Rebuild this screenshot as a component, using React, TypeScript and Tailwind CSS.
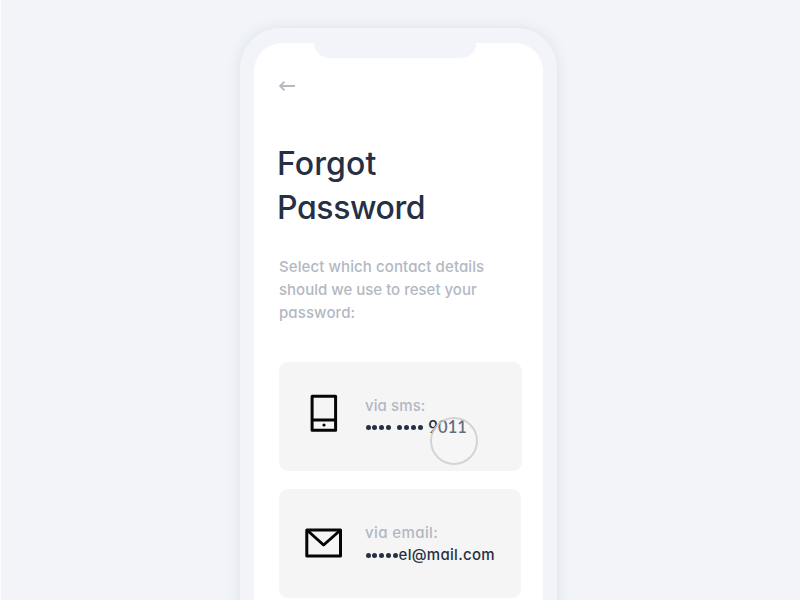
import React from 'react';

const dots = (count: number) => (
  <span className="flex gap-[1.9px]">
    {Array.from({ length: count }, (_, i) => (
      <span key={i} className="size-[5px] rounded-full bg-[#253044]" />
    ))}
  </span>
);

function PhoneIcon() {
  return (
    <svg className="h-[38px] w-[28px]" viewBox="0 0 28 38" fill="none" stroke="#050505" strokeWidth="3" strokeLinejoin="round">
      <rect x="2.1" y="2.3" width="23.5" height="34" />
      <path d="M2 26h24" />
      <circle cx="14" cy="31" r="1.6" fill="#050505" stroke="none" />
    </svg>
  );
}

function MailIcon() {
  return (
    <svg className="h-[30px] w-[38px]" viewBox="0 0 38 30" fill="none" stroke="#050505" strokeWidth="3" strokeLinejoin="round">
      <rect x="1.8" y="2" width="33.7" height="26" />
      <path d="M2.5 2.5L18.6 17L35 2.5" />
    </svg>
  );
}

export default function App() {
  return (
    <div className="flex h-[600px] w-[800px] justify-center overflow-hidden border-l border-[#fbfcfd] bg-[#f2f4f9] pr-[4px] pt-[28px] font-['Inter',sans-serif] font-medium text-[#253044] [font-feature-settings:'cv11','ss03']">
      <div className="h-[700px] w-[317px] shrink-0 rounded-[40px] bg-[#f2f4f9] px-[14px] pt-[15px] shadow-[0_0_14px_rgba(205,214,224,0.6)]">
        <main className="h-full rounded-t-[28px] bg-white">
          <div className="ml-[60px] h-[15px] w-[162px] rounded-b-[15px] bg-[#f2f4f9]" />
          <div className="pl-[25px] pt-[22px]">
            <svg className="h-[12px] w-[17px]" viewBox="0 0 17 12" fill="none" stroke="#b4b8c0" strokeWidth="1.8">
              <path d="M16 6H1.2M5.5 1.7L1 6L5.5 10.3" />
            </svg>
            <h1 className="-ml-[2px] mt-[50px] text-[32px] leading-[44px]">
              <span className="block tracking-[0.1px]">Forgot</span>
              <span className="block tracking-[-0.4px]">Password</span>
            </h1>
            <p className="mt-[25px] whitespace-nowrap text-[15px] leading-[23px] text-[#b2b8c3]">
              <span className="block tracking-[0.1px]">Select which contact details</span>
              <span className="block">should we use to reset your</span>
              <span className="block tracking-[0.1px]">password:</span>
            </p>
            <section className="relative mt-[38px] flex h-[108.5px] w-[243px] rounded-[9px] bg-[#f5f5f5]">
              <div className="ml-[31px] mt-[32px] w-[55px]"><PhoneIcon /></div>
              <div className="mt-[33px] text-[15px] leading-[22px]">
                <div className="tracking-[0.1px] text-[#b2b8c3]">via sms:</div>
                <div className="ml-[0.5px] flex h-[21px] items-center">
                  {dots(4)}
                  <span className="w-[6px]" />
                  {dots(4)}
                  <span className="-mt-[2px] ml-[5.5px] font-['Lato',sans-serif] text-[16.5px] font-semibold tracking-[0.1px]">9011</span>
                </div>
              </div>
              <div className="absolute left-[151px] top-[55px] size-[48px] rounded-full border-2 border-[#cbcbcb]/80 bg-[#fafafa]/30" />
            </section>
            <section className="mt-[18.5px] flex h-[109px] w-[242px] rounded-[9px] bg-[#f5f5f5]">
              <div className="ml-[26px] mt-[39px] w-[60px]"><MailIcon /></div>
              <div className="mt-[33px] text-[15px] leading-[22px]">
                <div className="tracking-[0.4px] text-[#b2b8c3]">via email:</div>
                <div className="ml-[0.5px] flex items-center">
                  {dots(5)}
                  <span className="ml-[0.5px] tracking-[0.3px]">el@mail.com</span>
                </div>
              </div>
            </section>
          </div>
        </main>
      </div>
    </div>
  );
}
